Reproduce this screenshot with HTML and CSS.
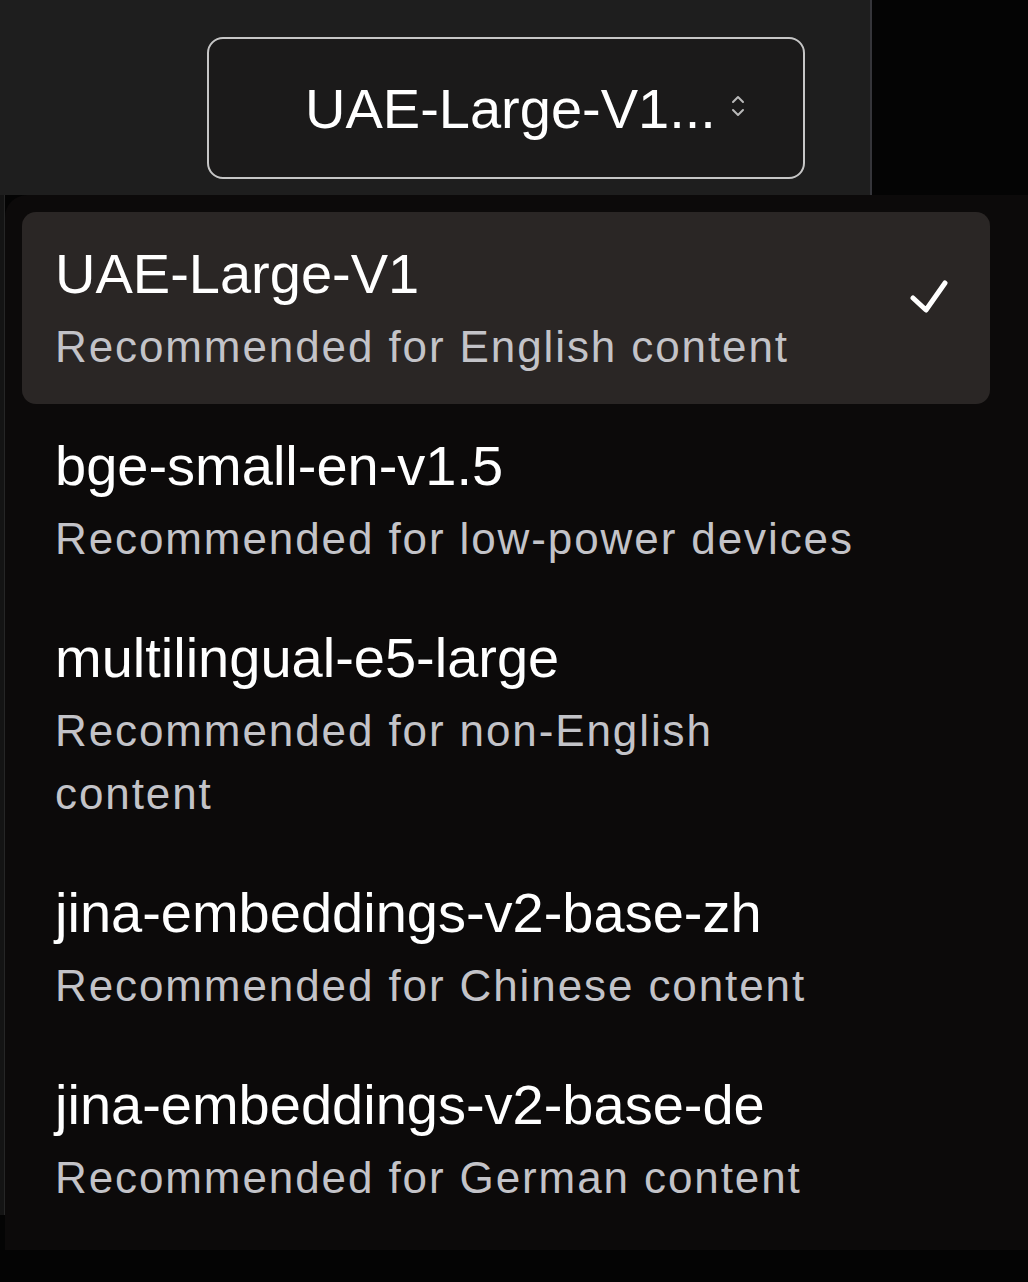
FILE: index.html
```html
<!DOCTYPE html>
<html lang="en">

<head>
    <meta charset="UTF-8">
    <meta name="viewport" content="width=device-width, initial-scale=1.0">
    <title>Embedding Model</title>
    <link rel="stylesheet" href="styles.css">
</head>

<body>
    <div class="toolbar">
        <button class="select-trigger">
            <span class="select-value">UAE-Large-V1...</span>
            <svg class="chevrons" viewBox="0 0 16 28" width="16" height="28">
                <path d="M3 10 L8 5 L13 10" />
                <path d="M3 18 L8 23 L13 18" />
            </svg>
        </button>
    </div>

    <div class="dropdown-area">
        <div class="rail"></div>
        <ul class="menu">
            <li class="option selected">
                <div class="option-text">
                    <div class="option-name">UAE-Large-V1</div>
                    <div class="option-desc">Recommended for English content</div>
                </div>
                <svg class="check" viewBox="0 0 38 34" width="38" height="34">
                    <path d="M3 19 L16 31 L35 4" />
                </svg>
            </li>
            <li class="option">
                <div class="option-text">
                    <div class="option-name">bge-small-en-v1.5</div>
                    <div class="option-desc">Recommended for low-power devices</div>
                </div>
                <span class="check-space"></span>
            </li>
            <li class="option">
                <div class="option-text">
                    <div class="option-name">multilingual-e5-large</div>
                    <div class="option-desc">Recommended for non-English content</div>
                </div>
                <span class="check-space"></span>
            </li>
            <li class="option">
                <div class="option-text">
                    <div class="option-name">jina-embeddings-v2-base-zh</div>
                    <div class="option-desc">Recommended for Chinese content</div>
                </div>
                <span class="check-space"></span>
            </li>
            <li class="option">
                <div class="option-text">
                    <div class="option-name">jina-embeddings-v2-base-de</div>
                    <div class="option-desc">Recommended for German content</div>
                </div>
                <span class="check-space"></span>
            </li>
        </ul>
    </div>
</body>

</html>
```

FILE: styles.css
```css
* {
    margin: 0;
    padding: 0;
    box-sizing: border-box;
    font-family: 'Liberation Sans', Arial, sans-serif;
}

body {
    background: #040404;
    height: 1282px;
    overflow: hidden;
}

/* Top bar with the select */
.toolbar {
    width: 872px;
    height: 195px;
    background: #1e1e1e;
    border-right: 2px solid #35353a;
    padding: 37px 0 0 207px;
}

.select-trigger {
    width: 598px;
    height: 142px;
    background: #1b1a1a;
    border: 2px solid #c6c6c6;
    border-radius: 16px;
    display: flex;
    align-items: center;
    padding-left: 96px;
    color: #fff;
    cursor: pointer;
}

.select-value {
    font-size: 56px;
    color: #fff;
}

.chevrons {
    margin-left: 14px;
    margin-top: -4px;
    fill: none;
    stroke: #b9b9b9;
    stroke-width: 2;
    stroke-linecap: round;
    stroke-linejoin: round;
}

/* Dropdown list */
.dropdown-area {
    display: flex;
    align-items: flex-start;
}

.rail {
    width: 5px;
    height: 1020px;
    background: #141414;
    border-right: 1px solid #262626;
}

.menu {
    flex: 1;
    list-style: none;
    background: #0c0a0a;
    border-top-left-radius: 22px;
    padding: 17px 38px 15px 17px;
}

.option {
    display: flex;
    padding: 30px 42px 26px 33px;
    border-radius: 14px;
}

.option.selected {
    background: #2a2625;
}

.option-text {
    flex: 1;
}

.option-name {
    font-size: 56px;
    line-height: 64px;
    color: #fff;
}

.option-desc {
    margin-top: 9px;
    font-size: 44px;
    line-height: 63px;
    letter-spacing: 1.9px;
    color: #c3c3c8;
}

.check,
.check-space {
    width: 38px;
    flex-shrink: 0;
    margin-left: 33px;
}

.check {
    margin-top: 37px;
    fill: none;
    stroke: #fff;
    stroke-width: 5;
    stroke-linecap: round;
    stroke-linejoin: round;
}
```
